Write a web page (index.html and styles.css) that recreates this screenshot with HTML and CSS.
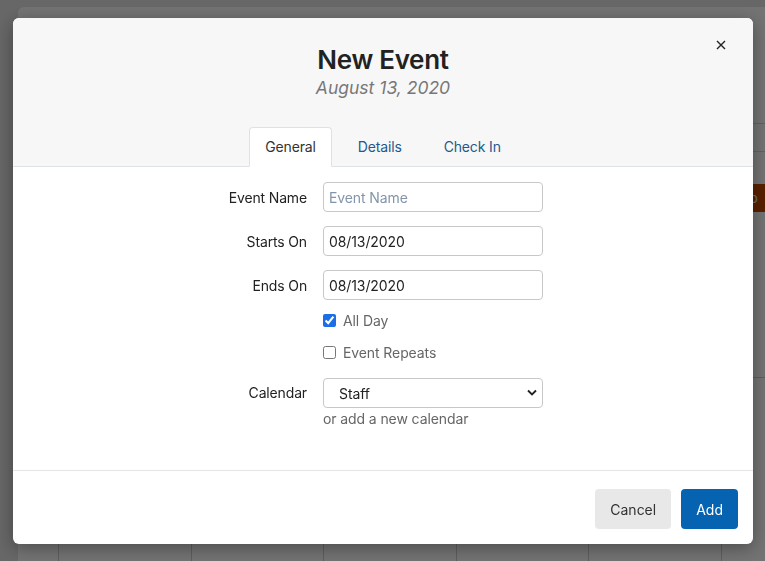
FILE: index.html
```html
<!DOCTYPE html>
<html lang="en">
<head>
  <meta charset="UTF-8">
  <meta name="viewport" content="width=device-width, initial-scale=1.0">
  <title>Calendar - New Event</title>
  <link rel="stylesheet" href="styles.css">
</head>
<body>
  <div class="calendar">
    <div class="calendar-top"></div>
    <div class="calendar-days"></div>
    <div class="calendar-grid">
      <div class="week-col"></div>
      <div class="day-col"></div>
      <div class="day-col"></div>
      <div class="day-col"></div>
      <div class="day-col"></div>
      <div class="day-col"></div>
      <div class="day-col">
        <div class="cal-event">ap</div>
        <div class="cal-line"></div>
      </div>
    </div>
  </div>

  <div class="backdrop">
    <div class="modal">
      <div class="modal-header">
        <button class="close-btn" aria-label="Close">
          <svg width="10" height="10" viewBox="0 0 10 10"><path d="M1 1L9 9M9 1L1 9" stroke="#222" stroke-width="1.4"/></svg>
        </button>
        <h3 class="modal-title">New Event</h3>
        <div class="modal-date">August 13, 2020</div>
        <ul class="tabs">
          <li class="tab active">General</li>
          <li class="tab">Details</li>
          <li class="tab">Check In</li>
        </ul>
      </div>

      <form class="modal-body">
        <label class="field-label" for="event-name">Event Name</label>
        <input class="field" id="event-name" type="text" placeholder="Event Name">

        <label class="field-label" for="starts-on">Starts On</label>
        <input class="field" id="starts-on" type="text" value="08/13/2020">

        <label class="field-label" for="ends-on">Ends On</label>
        <input class="field" id="ends-on" type="text" value="08/13/2020">

        <div></div>
        <label class="check"><input type="checkbox" checked> All Day</label>

        <div></div>
        <label class="check"><input type="checkbox"> Event Repeats</label>

        <label class="field-label calendar-label" for="calendar">Calendar</label>
        <div class="select-wrap">
          <select class="field" id="calendar">
            <option>Staff</option>
          </select>
          <svg class="chevron" width="10" height="7" viewBox="0 0 10 7"><path d="M1 1.5L5 5.5L9 1.5" fill="none" stroke="#222" stroke-width="1.8"/></svg>
          <div class="help-text">or add a new calendar</div>
        </div>
      </form>

      <div class="modal-footer">
        <button class="btn btn-cancel">Cancel</button>
        <button class="btn btn-add">Add</button>
      </div>
    </div>
  </div>
</body>
</html>
```

FILE: styles.css
```css
* {
  margin: 0;
  padding: 0;
  box-sizing: border-box;
}

html,
body {
  height: 100%;
  overflow: hidden;
}

body {
  font-family: Inter, "Noto Sans", sans-serif;
  background: #e4e4e4;
  padding: 7px 0 0 18px;
}

/* page behind the dialog */
.calendar {
  background: #fff;
  border-radius: 6px 0 0 0;
  height: 100%;
  display: flex;
  flex-direction: column;
}

.calendar-top {
  height: 116px;
}

.calendar-days {
  height: 29px;
  border-top: 1px solid #d8d8d8;
  border-bottom: 1px solid #d8d8d8;
}

.calendar-grid {
  flex: 1;
  display: grid;
  grid-template-columns: 41px repeat(5, 132.5px) 1fr;
}

.week-col,
.day-col {
  border-right: 1px solid #d0d0d0;
}

.day-col:last-child {
  border-right: none;
  padding-top: 32px;
  min-width: 0;
}

.cal-event {
  background: #c44a00;
  color: #f3f3f3;
  height: 28px;
  line-height: 28px;
  font-size: 14px;
  margin-left: 16px;
  padding-left: 4px;
  overflow: hidden;
}

.cal-line {
  margin-top: 165px;
  border-top: 1px solid #d0d0d0;
}

/* dialog */
.backdrop {
  position: fixed;
  inset: 0;
  background: rgba(0, 0, 0, 0.55);
  padding: 18px 0 0 13px;
}

.modal {
  width: 740px;
  height: 526px;
  background: #fff;
  border-radius: 6px;
  box-shadow: 0 4px 18px rgba(0, 0, 0, 0.35);
  display: flex;
  flex-direction: column;
  overflow: hidden;
}

.modal-header {
  position: relative;
  background: #f7f7f7;
  border-bottom: 1px solid #dee2e6;
  padding-top: 26px;
  text-align: center;
}

.close-btn {
  position: absolute;
  top: 22px;
  right: 27px;
  background: none;
  border: none;
  width: 10px;
  height: 10px;
  display: flex;
}

.modal-title {
  font-size: 26px;
  font-weight: 600;
  color: #222;
  line-height: 32px;
  letter-spacing: -0.3px;
}

.modal-date {
  font-size: 17.5px;
  font-style: italic;
  color: #777;
  line-height: 22px;
  margin-top: 1px;
}

.tabs {
  list-style: none;
  display: flex;
  justify-content: center;
  gap: 10px;
  margin-top: 28px;
  margin-bottom: -1px;
}

.tab {
  font-size: 14px;
  line-height: 21px;
  letter-spacing: -0.15px;
  padding: 8px 15px 9px;
  color: #1d5a8e;
  border: 1px solid transparent;
  border-radius: 4px 4px 0 0;
}

.tab.active {
  color: #333;
  background: #fff;
  border-color: #dee2e6 #dee2e6 #fff;
}

.modal-body {
  flex: 1;
  display: grid;
  grid-template-columns: 294px 220px;
  column-gap: 16px;
  row-gap: 14px;
  align-content: start;
  align-items: center;
  padding-top: 15px;
}

.field-label {
  text-align: right;
  font-size: 14px;
  letter-spacing: -0.15px;
  color: #222;
}

.calendar-label {
  align-self: start;
  line-height: 30px;
}

.field {
  width: 220px;
  height: 30px;
  border: 1px solid #c8c8c8;
  border-radius: 4px;
  padding: 0 5px;
  font-family: inherit;
  font-size: 14px;
  letter-spacing: -0.1px;
  color: #222;
  background: #fff;
  outline: none;
}

.field::placeholder {
  color: #8295aa;
}

.check {
  display: flex;
  align-items: center;
  gap: 7px;
  font-size: 14px;
  letter-spacing: -0.1px;
  color: #666;
  height: 18px;
  margin: -3px 0 3px;
}

.check input {
  width: 13px;
  height: 13px;
  margin: 0;
  accent-color: #1a6ee8;
}

.select-wrap {
  position: relative;
}

.select-wrap select {
  appearance: none;
  padding-left: 15px;
}

.chevron {
  position: absolute;
  top: 11px;
  right: 6px;
}

.help-text {
  font-size: 14px;
  letter-spacing: -0.1px;
  color: #666;
  margin-top: 2px;
}

.modal-footer {
  border-top: 1px solid #e5e5e5;
  display: flex;
  justify-content: flex-end;
  gap: 10px;
  padding: 18px 15px 15px;
  height: 74px;
}

.btn {
  height: 40px;
  padding: 0 15px;
  border: none;
  border-radius: 4px;
  font-family: inherit;
  font-size: 14px;
}

.btn-cancel {
  background: #e8e8e8;
  color: #333;
}

.btn-add {
  background: #0563b1;
  color: #fff;
}
```
